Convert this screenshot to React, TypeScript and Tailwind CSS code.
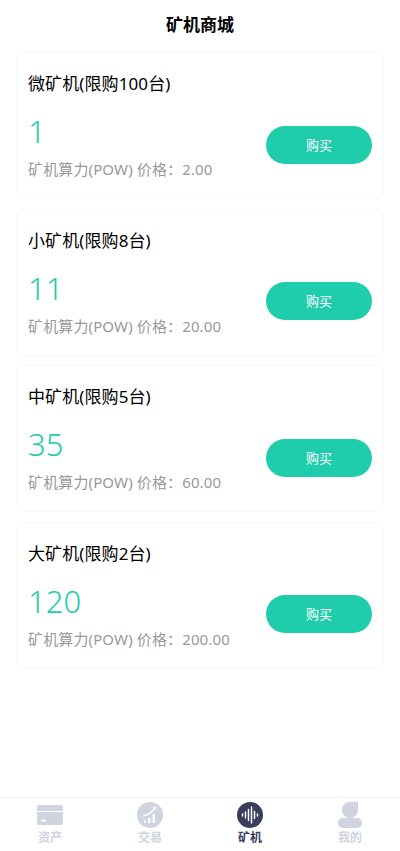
const machines = [
  { name: '微矿机(限购100台)', power: '1', price: '2.00' },
  { name: '小矿机(限购8台)', power: '11', price: '20.00' },
  { name: '中矿机(限购5台)', power: '35', price: '60.00' },
  { name: '大矿机(限购2台)', power: '120', price: '200.00' },
];

const fontStack = { fontFamily: '"Noto Sans", "Noto Sans CJK SC", sans-serif' };

function CardIcon() {
  return (
    <svg width="26" height="20" viewBox="0 0 26 20">
      <path d="M2 0h22a2 2 0 0 1 2 2v4H0V2a2 2 0 0 1 2-2z" fill="#d0d4e0" />
      <path d="M0 7h26v11a2 2 0 0 1-2 2H2a2 2 0 0 1-2-2z" fill="#d0d4e0" />
      <rect x="4" y="14.5" width="5" height="2" fill="#fff" />
    </svg>
  );
}

function TradeIcon() {
  return (
    <svg width="26" height="26" viewBox="0 0 26 26">
      <circle cx="13" cy="13" r="13" fill="#d0d4e0" />
      <rect x="7" y="18.5" width="2" height="2.5" fill="#fff" />
      <rect x="11" y="16" width="2.5" height="5" fill="#fff" />
      <rect x="15.5" y="12" width="2.5" height="9" fill="#fff" />
      <path d="M6 14c5-1 9-4 12-8" stroke="#fff" strokeWidth="1.5" fill="none" />
      <path d="M15.5 5.5l4-1-.5 4z" fill="#fff" />
    </svg>
  );
}

function MinerIcon() {
  return (
    <svg width="26" height="26" viewBox="0 0 26 26">
      <circle cx="13" cy="13" r="13" fill="#3a3d5c" />
      <g stroke="#fff" strokeWidth="1.5" strokeLinecap="round">
        <path d="M5.5 12v2" />
        <path d="M8.5 10v6" />
        <path d="M11.5 7.5v11" />
        <path d="M14.5 5v16" />
        <path d="M17.5 9.5v7" />
        <path d="M20.5 12v2" />
      </g>
    </svg>
  );
}

function UserIcon() {
  return (
    <svg width="24" height="26" viewBox="0 0 24 26">
      <path d="M12 0h8v8a8 8 0 1 1-8-8z" fill="#d0d4e0" />
      <rect x="0" y="16" width="24" height="10" rx="5" fill="#d0d4e0" />
    </svg>
  );
}

const tabs = [
  { label: '资产', icon: <CardIcon />, active: false },
  { label: '交易', icon: <TradeIcon />, active: false },
  { label: '矿机', icon: <MinerIcon />, active: true },
  { label: '我的', icon: <UserIcon />, active: false },
];

export default function App() {
  return (
    <div className="w-[400px] h-[851px] bg-white flex flex-col" style={fontStack}>
      <header className="h-[50px] flex items-center justify-center text-[17px] font-bold text-black">
        矿机商城
      </header>

      <main className="flex-1 px-[16px] pt-[2px] flex flex-col gap-[9.5px]">
        {machines.map((m) => (
          <div key={m.name} className="h-[147px] rounded-[8px] border border-[#f7f7f7] px-[11px] pt-[18px]">
            <div className="text-[17px] leading-[26px] tracking-[0.1px] text-black">{m.name}</div>
            <div className="mt-[12px] flex items-center justify-between">
              <div>
                <div className="text-[31px] leading-[44px] font-[350] text-[#1fcdac]">{m.power}</div>
                <div className="mt-[5px] text-[15px] leading-[22px] tracking-[0.13px] text-[#999999]">
                  矿机算力(POW) 价格：{m.price}
                </div>
              </div>
              <button className="w-[106px] h-[38px] pt-[2px] rounded-full bg-[#1fcdac] text-white text-[13px]">
                购买
              </button>
            </div>
          </div>
        ))}
      </main>

      <nav className="h-[54px] border-t border-[#f3f3f3] grid grid-cols-4 pt-[4px]">
        {tabs.map((t) => (
          <div key={t.label} className="flex flex-col items-center">
            <div className="h-[26px] flex items-center">{t.icon}</div>
            <span className={`mt-[2px] text-[12px] leading-[16px] font-bold ${t.active ? 'text-[#3a3d5c]' : 'text-[#d0d4e0]'}`}>
              {t.label}
            </span>
          </div>
        ))}
      </nav>
    </div>
  );
}
